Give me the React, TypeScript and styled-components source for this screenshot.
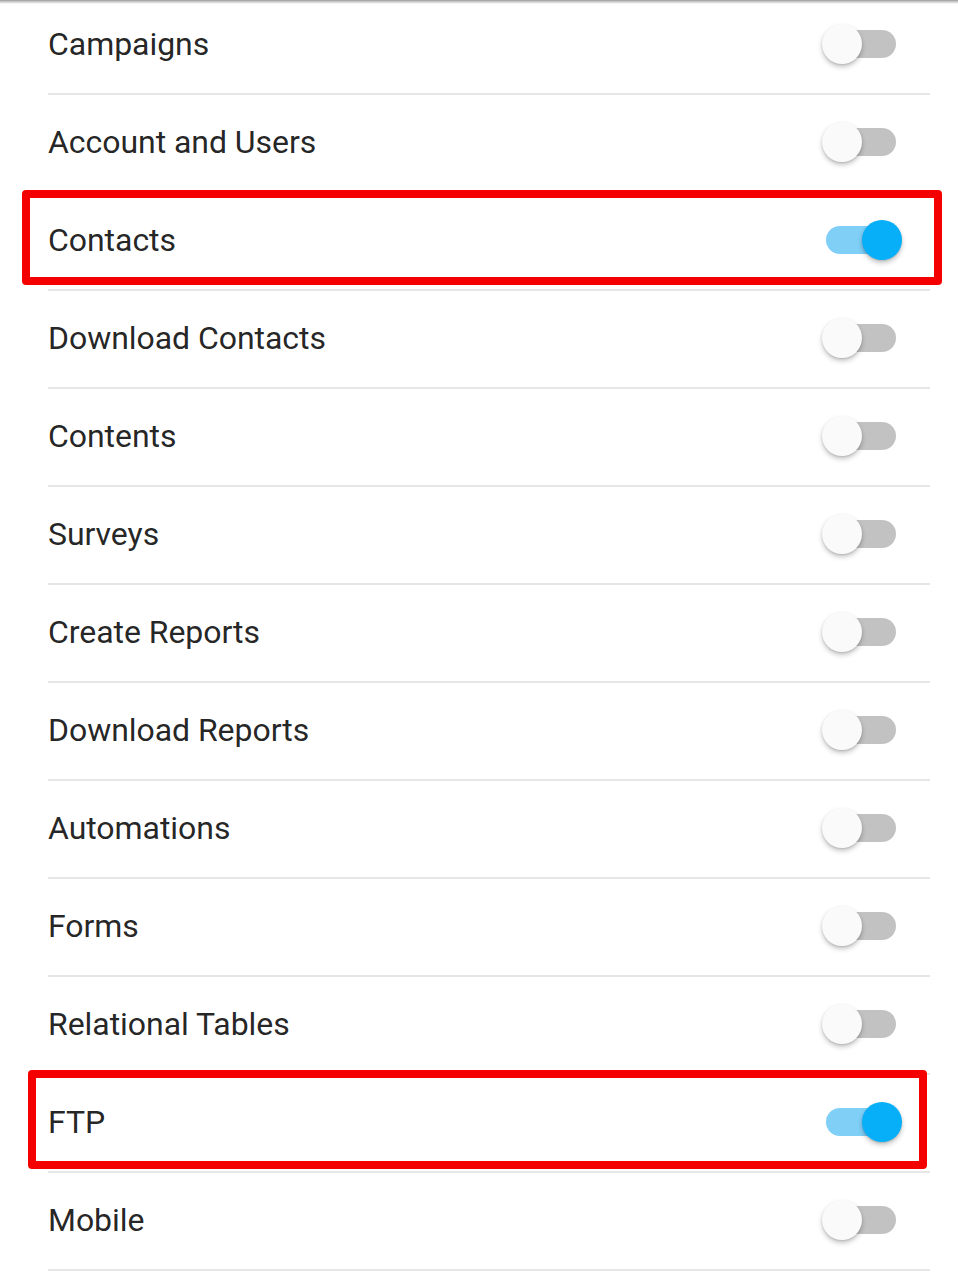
import React from "react";
import styled, { createGlobalStyle } from "styled-components";

const Global = createGlobalStyle`
  html, body {
    margin: 0;
    padding: 0;
    background: #ffffff;
    overflow: hidden;
  }
  body {
    font-family: Roboto, "Noto Sans", "Liberation Sans", sans-serif;
    -webkit-font-smoothing: antialiased;
  }
`;

const Page = styled.div`
  position: relative;
  width: 958px;
  height: 1282px;
  overflow: hidden;
  background: #ffffff;
`;

const TopShadow = styled.div`
  position: absolute;
  top: 0;
  left: 0;
  right: 0;
  height: 4px;
  background: linear-gradient(
    to bottom,
    #9a9a9a 0%,
    #c8c8c8 40%,
    rgba(255, 255, 255, 0) 100%
  );
  z-index: 5;
`;

const List = styled.ul`
  list-style: none;
  margin: -3px 28px 0 48px;
  padding: 0;
  display: flex;
  flex-direction: column;
`;

const Row = styled.li`
  position: relative;
  box-sizing: border-box;
  height: 98px;
  padding-bottom: 2px;
  border-bottom: 2px solid #e6e6e6;
  display: flex;
  align-items: center;
  justify-content: space-between;
`;

const Label = styled.span`
  font-size: 32px;
  font-weight: 400;
  color: rgba(0, 0, 0, 0.87);
  letter-spacing: -0.05px;
`;

const SwitchArea = styled.span`
  position: relative;
  width: 80px;
  height: 40px;
  margin-right: 28px;
  display: flex;
  align-items: center;
  flex-shrink: 0;
`;

const Track = styled.span<{ $on: boolean }>`
  margin-left: 4px;
  width: 70px;
  height: 28px;
  border-radius: 14px;
  background: ${(p) => (p.$on ? "#80cff7" : "#c2c2c2")};
`;

const Thumb = styled.span<{ $on: boolean }>`
  position: absolute;
  top: 0;
  left: ${(p) => (p.$on ? "40px" : "0px")};
  width: 40px;
  height: 40px;
  border-radius: 50%;
  background: ${(p) => (p.$on ? "#06aff7" : "#fafafa")};
  box-shadow: 0 3px 5px rgba(0, 0, 0, 0.22), 0 1px 2px rgba(0, 0, 0, 0.12);
`;

const Highlight = styled.span<{
  $top: number;
  $left: number;
  $width: number;
  $height: number;
}>`
  position: absolute;
  top: ${(p) => p.$top}px;
  left: ${(p) => p.$left}px;
  width: ${(p) => p.$width}px;
  height: ${(p) => p.$height}px;
  box-sizing: border-box;
  border: 8px solid #f50000;
  border-radius: 4px;
  pointer-events: none;
  z-index: 3;
`;

type Item = {
  label: string;
  on: boolean;
  box?: { top: number; left: number; width: number; height: number };
};

const items: Item[] = [
  { label: "Campaigns", on: false },
  { label: "Account and Users", on: false },
  {
    label: "Contacts",
    on: true,
    box: { top: -3, left: -26, width: 920, height: 95 },
  },
  { label: "Download Contacts", on: false },
  { label: "Contents", on: false },
  { label: "Surveys", on: false },
  { label: "Create Reports", on: false },
  { label: "Download Reports", on: false },
  { label: "Automations", on: false },
  { label: "Forms", on: false },
  { label: "Relational Tables", on: false },
  {
    label: "FTP",
    on: true,
    box: { top: -5, left: -20, width: 899, height: 99 },
  },
  { label: "Mobile", on: false },
];

const Switch: React.FC<{ on: boolean }> = ({ on }) => (
  <SwitchArea role="switch" aria-checked={on}>
    <Track $on={on} />
    <Thumb $on={on} />
  </SwitchArea>
);

export default function App() {
  return (
    <Page>
      <Global />
      <TopShadow />
      <List>
        {items.map((it) => (
          <Row key={it.label}>
            <Label>{it.label}</Label>
            <Switch on={it.on} />
            {it.box && (
              <Highlight
                $top={it.box.top}
                $left={it.box.left}
                $width={it.box.width}
                $height={it.box.height}
              />
            )}
          </Row>
        ))}
      </List>
    </Page>
  );
}
